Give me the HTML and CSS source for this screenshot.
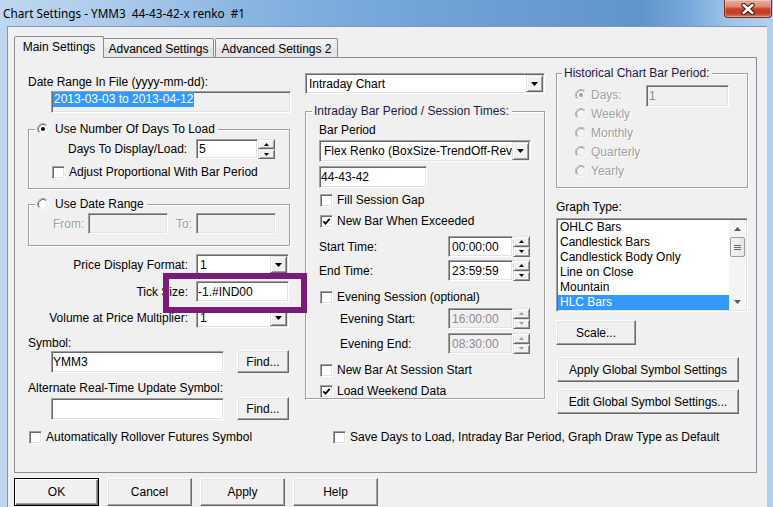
FILE: index.html
```html
<!DOCTYPE html>
<html>
<head>
<meta charset="utf-8">
<title>Chart Settings</title>
<link rel="stylesheet" href="styles.css">
</head>
<body>
<div class="window">
  <div class="titlebar">
    <span class="title">Chart Settings - YMM3  44-43-42-x renko  #1</span>
    <div class="close">
      <svg width="16" height="12" viewBox="0 0 16 12"><path d="M3.5 2 L12.5 10 M12.5 2 L3.5 10" stroke="#3b1510" stroke-width="4.4" stroke-linecap="round"/><path d="M3.5 2 L12.5 10 M12.5 2 L3.5 10" stroke="#fff" stroke-width="2.4" stroke-linecap="round"/></svg>
    </div>
  </div>
  <div class="client">
    <div class="tabs">
      <div class="tab sel">Main Settings</div>
      <div class="tab t2">Advanced Settings</div>
      <div class="tab t3">Advanced Settings 2</div>
    </div>
    <div class="panel">
      <div class="cols">
        <!-- LEFT COLUMN -->
        <div class="col col-left">
          <div class="lbl l-date">Date Range In File (yyyy-mm-dd):</div>
          <div class="field ro date"><span class="hl">2013-03-03 to 2013-04-12</span></div>

          <fieldset class="grp g1">
            <legend class="lg-a"><span class="leg">
              <svg class="radio" width="12" height="12" viewBox="0 0 12 12"><circle cx="6" cy="6" r="5.5" fill="#fff"/><path d="M2.11 9.89A5.5 5.5 0 0 1 9.89 2.11" fill="none" stroke="#a0a0a0"/><path d="M9.89 2.11A5.5 5.5 0 0 1 2.11 9.89" fill="none" stroke="#fff"/><path d="M2.82 9.18A4.5 4.5 0 0 1 9.18 2.82" fill="none" stroke="#696969"/><path d="M9.18 2.82A4.5 4.5 0 0 1 2.82 9.18" fill="none" stroke="#e3e3e3"/><circle cx="6" cy="6" r="2" fill="#000"/></svg>
              <span>Use Number Of Days To Load</span></span></legend>
            <div class="gb g1-body">
              <div class="row days-row">
                <span class="lbl days-l">Days To Display/Load:</span>
                <div class="spin days-spin">
                  <div class="field sv">5</div>
                  <div class="ud"><span class="raised"><svg width="5" height="3" viewBox="0 0 5 3"><path d="M0 3h5L2.5 0z"/></svg></span><span class="raised"><svg width="5" height="3" viewBox="0 0 5 3"><path d="M0 0h5L2.5 3z"/></svg></span></div>
                </div>
              </div>
              <div class="chk adj"><span class="cb"></span><span>Adjust Proportional With Bar Period</span></div>
            </div>
          </fieldset>

          <fieldset class="grp g2">
            <legend class="lg-a"><span class="leg">
              <svg class="radio" width="12" height="12" viewBox="0 0 12 12"><circle cx="6" cy="6" r="5.5" fill="#fff"/><path d="M2.11 9.89A5.5 5.5 0 0 1 9.89 2.11" fill="none" stroke="#a0a0a0"/><path d="M9.89 2.11A5.5 5.5 0 0 1 2.11 9.89" fill="none" stroke="#fff"/><path d="M2.82 9.18A4.5 4.5 0 0 1 9.18 2.82" fill="none" stroke="#696969"/><path d="M9.18 2.82A4.5 4.5 0 0 1 2.82 9.18" fill="none" stroke="#e3e3e3"/></svg>
              <span>Use Date Range</span></span></legend>
            <div class="gb g2-body">
              <div class="row fromto">
                <span class="dis from-l">From:</span>
                <div class="field off ft"></div>
                <span class="dis to-l">To:</span>
                <div class="field off ft"></div>
              </div>
            </div>
          </fieldset>

          <div class="row frow pdf"><span class="rl">Price Display Format:</span>
            <div class="combo c93"><span class="cv">1</span><span class="drop raised"><svg width="7" height="4" viewBox="0 0 7 4"><path d="M0 0h7L3.5 4z"/></svg></span></div></div>
          <div class="row frow tick"><span class="rl">Tick Size:</span>
            <div class="field tickf">-1.#IND00</div></div>
          <div class="row frow vol"><span class="rl">Volume at Price Multiplier:</span>
            <div class="combo c93"><span class="cv">1</span><span class="drop raised"><svg width="7" height="4" viewBox="0 0 7 4"><path d="M0 0h7L3.5 4z"/></svg></span></div></div>

          <div class="lbl sym-l">Symbol:</div>
          <div class="row symrow"><div class="field symf">YMM3</div><div class="btn find">Find...</div></div>
          <div class="lbl alt-l">Alternate Real-Time Update Symbol:</div>
          <div class="row symrow alt"><div class="field symf"></div><div class="btn find">Find...</div></div>
        </div>

        <!-- MIDDLE COLUMN -->
        <div class="col col-mid">
          <div class="combo intraday"><span class="cv">Intraday Chart</span><span class="drop raised"><svg width="7" height="4" viewBox="0 0 7 4"><path d="M0 0h7L3.5 4z"/></svg></span></div>
          <fieldset class="grp g3">
            <legend class="lg-b"><span class="leg navy">Intraday Bar Period / Session Times:</span></legend>
            <div class="gb g3-body">
              <div class="lbl bp-l">Bar Period</div>
              <div class="combo bp"><span class="cv">Flex Renko (BoxSize-TrendOff-Rev</span><span class="drop raised"><svg width="7" height="4" viewBox="0 0 7 4"><path d="M0 0h7L3.5 4z"/></svg></span></div>
              <div class="field bpv">44-43-42</div>
              <div class="chk fsg"><span class="cb"></span><span>Fill Session Gap</span></div>
              <div class="chk nbw"><span class="cb"><svg width="9" height="9" viewBox="0 0 9 9"><path d="M1.3 4.3 L3.5 6.6 L7.7 1.9" fill="none" stroke="#000" stroke-width="1.8"/></svg></span><span>New Bar When Exceeded</span></div>
              <div class="row trow st"><span class="lbl tl">Start Time:</span>
                <div class="spin tspin"><div class="field sv">00:00:00</div><div class="ud"><span class="raised"><svg width="5" height="3" viewBox="0 0 5 3"><path d="M0 3h5L2.5 0z"/></svg></span><span class="raised"><svg width="5" height="3" viewBox="0 0 5 3"><path d="M0 0h5L2.5 3z"/></svg></span></div></div></div>
              <div class="row trow et"><span class="lbl tl">End Time:</span>
                <div class="spin tspin"><div class="field sv">23:59:59</div><div class="ud"><span class="raised"><svg width="5" height="3" viewBox="0 0 5 3"><path d="M0 3h5L2.5 0z"/></svg></span><span class="raised"><svg width="5" height="3" viewBox="0 0 5 3"><path d="M0 0h5L2.5 3z"/></svg></span></div></div></div>
              <div class="chk evs"><span class="cb"></span><span>Evening Session (optional)</span></div>
              <div class="row trow ev1"><span class="lbl tl2">Evening Start:</span>
                <div class="spin tspin off"><div class="field off sv">16:00:00</div><div class="ud"><span class="raised"><svg width="5" height="3" viewBox="0 0 5 3"><path d="M0 3h5L2.5 0z"/></svg></span><span class="raised"><svg width="5" height="3" viewBox="0 0 5 3"><path d="M0 0h5L2.5 3z"/></svg></span></div></div></div>
              <div class="row trow ev2"><span class="lbl tl2">Evening End:</span>
                <div class="spin tspin off"><div class="field off sv">08:30:00</div><div class="ud"><span class="raised"><svg width="5" height="3" viewBox="0 0 5 3"><path d="M0 3h5L2.5 0z"/></svg></span><span class="raised"><svg width="5" height="3" viewBox="0 0 5 3"><path d="M0 0h5L2.5 3z"/></svg></span></div></div></div>
              <div class="chk nbs"><span class="cb"></span><span>New Bar At Session Start</span></div>
              <div class="chk lwd"><span class="cb"><svg width="9" height="9" viewBox="0 0 9 9"><path d="M1.3 4.3 L3.5 6.6 L7.7 1.9" fill="none" stroke="#000" stroke-width="1.8"/></svg></span><span>Load Weekend Data</span></div>
            </div>
          </fieldset>
        </div>

        <!-- RIGHT COLUMN -->
        <div class="col col-right">
          <fieldset class="grp g4">
            <legend class="lg-c"><span class="leg navy">Historical Chart Bar Period:</span></legend>
            <div class="gb g4-body">
              <div class="radios">
                <div class="rrow"><svg class="radio" width="12" height="12" viewBox="0 0 12 12"><circle cx="6" cy="6" r="5.5" fill="#f4f4f4"/><path d="M2.11 9.89A5.5 5.5 0 0 1 9.89 2.11" fill="none" stroke="#b4b4b4"/><path d="M9.89 2.11A5.5 5.5 0 0 1 2.11 9.89" fill="none" stroke="#fff"/><path d="M2.82 9.18A4.5 4.5 0 0 1 9.18 2.82" fill="none" stroke="#a0a0a0"/><path d="M9.18 2.82A4.5 4.5 0 0 1 2.82 9.18" fill="none" stroke="#e3e3e3"/><circle cx="6" cy="6" r="2" fill="#a0a0a0"/></svg><span class="dis">Days:</span></div>
                <div class="rrow"><svg class="radio" width="12" height="12" viewBox="0 0 12 12"><circle cx="6" cy="6" r="5.5" fill="#f4f4f4"/><path d="M2.11 9.89A5.5 5.5 0 0 1 9.89 2.11" fill="none" stroke="#b4b4b4"/><path d="M9.89 2.11A5.5 5.5 0 0 1 2.11 9.89" fill="none" stroke="#fff"/><path d="M2.82 9.18A4.5 4.5 0 0 1 9.18 2.82" fill="none" stroke="#a0a0a0"/><path d="M9.18 2.82A4.5 4.5 0 0 1 2.82 9.18" fill="none" stroke="#e3e3e3"/></svg><span class="dis">Weekly</span></div>
                <div class="rrow"><svg class="radio" width="12" height="12" viewBox="0 0 12 12"><circle cx="6" cy="6" r="5.5" fill="#f4f4f4"/><path d="M2.11 9.89A5.5 5.5 0 0 1 9.89 2.11" fill="none" stroke="#b4b4b4"/><path d="M9.89 2.11A5.5 5.5 0 0 1 2.11 9.89" fill="none" stroke="#fff"/><path d="M2.82 9.18A4.5 4.5 0 0 1 9.18 2.82" fill="none" stroke="#a0a0a0"/><path d="M9.18 2.82A4.5 4.5 0 0 1 2.82 9.18" fill="none" stroke="#e3e3e3"/></svg><span class="dis">Monthly</span></div>
                <div class="rrow"><svg class="radio" width="12" height="12" viewBox="0 0 12 12"><circle cx="6" cy="6" r="5.5" fill="#f4f4f4"/><path d="M2.11 9.89A5.5 5.5 0 0 1 9.89 2.11" fill="none" stroke="#b4b4b4"/><path d="M9.89 2.11A5.5 5.5 0 0 1 2.11 9.89" fill="none" stroke="#fff"/><path d="M2.82 9.18A4.5 4.5 0 0 1 9.18 2.82" fill="none" stroke="#a0a0a0"/><path d="M9.18 2.82A4.5 4.5 0 0 1 2.82 9.18" fill="none" stroke="#e3e3e3"/></svg><span class="dis">Quarterly</span></div>
                <div class="rrow"><svg class="radio" width="12" height="12" viewBox="0 0 12 12"><circle cx="6" cy="6" r="5.5" fill="#f4f4f4"/><path d="M2.11 9.89A5.5 5.5 0 0 1 9.89 2.11" fill="none" stroke="#b4b4b4"/><path d="M9.89 2.11A5.5 5.5 0 0 1 2.11 9.89" fill="none" stroke="#fff"/><path d="M2.82 9.18A4.5 4.5 0 0 1 9.18 2.82" fill="none" stroke="#a0a0a0"/><path d="M9.18 2.82A4.5 4.5 0 0 1 2.82 9.18" fill="none" stroke="#e3e3e3"/></svg><span class="dis">Yearly</span></div>
              </div>
              <div class="field off daysv">1</div>
            </div>
          </fieldset>
          <div class="lbl gt-l">Graph Type:</div>
          <div class="listbox">
            <div class="items">
              <div class="item">OHLC Bars</div>
              <div class="item">Candlestick Bars</div>
              <div class="item">Candlestick Body Only</div>
              <div class="item">Line on Close</div>
              <div class="item">Mountain</div>
              <div class="item sel">HLC Bars</div>
            </div>
            <div class="vscroll">
              <span class="sb-arrow"><svg width="7" height="4" viewBox="0 0 7 4"><path d="M0 4h7L3.5 0z" fill="#5a5a5a"/></svg></span>
              <span class="sb-track"><span class="thumb"><svg width="7" height="7" viewBox="0 0 7 7"><path d="M0 1.5h7M0 3.5h7M0 5.5h7" stroke="#6a6a6a" stroke-width="1"/></svg></span></span>
              <span class="sb-arrow"><svg width="7" height="4" viewBox="0 0 7 4"><path d="M0 0h7L3.5 4z" fill="#5a5a5a"/></svg></span>
            </div>
          </div>
          <div class="btn scale">Scale...</div>
          <div class="btn glob apply-g">Apply Global Symbol Settings</div>
          <div class="btn glob edit-g">Edit Global Symbol Settings...</div>
        </div>
      </div>

      <div class="row bottom-checks">
        <div class="chk roll"><span class="cb"></span><span>Automatically Rollover Futures Symbol</span></div>
        <div class="chk save"><span class="cb"></span><span>Save Days to Load, Intraday Bar Period, Graph Draw Type as Default</span></div>
      </div>

      <div class="annot"></div>
    </div>

    <div class="buttons">
      <div class="btn big default">OK</div>
      <div class="btn big">Cancel</div>
      <div class="btn big">Apply</div>
      <div class="btn big">Help</div>
    </div>
  </div>
</div>
</body>
</html>
```

FILE: styles.css
```css
* { box-sizing: border-box; }
html, body { margin: 0; padding: 0; }
body {
  width: 773px; height: 507px; overflow: hidden;
  font-family: "Liberation Sans", Arial, sans-serif; font-size: 12px; color: #000;
  background: linear-gradient(to right, #bfd7f0 0, #adcbeb 110px, #88b4e0 250px, #72a5d9 400px, #6599d0 560px, #6095cc 640px, #76a9db 690px, #a0c4e8 730px, #b3d0ee 773px);
}
.window { width: 773px; height: 507px; display: flex; flex-direction: column; }

/* title bar */
.titlebar { height: 26px; flex: none; display: flex; justify-content: space-between; align-items: flex-start; }
.title { font-family: "Noto Sans", sans-serif; font-size: 11.75px; line-height: 16px; white-space: pre; margin: 5px 0 0 3px; }
.close {
  width: 48px; height: 18px; margin-right: 1px;
  border: 1px solid #7d2a1e; border-top: 0; border-radius: 0 0 4px 4px;
  background: linear-gradient(#eab0a2 0, #dc8874 38%, #c7462d 52%, #c03b21 75%, #da7860 100%);
  box-shadow: inset 0 0 0 1px rgba(255,255,255,.3);
  display: flex; align-items: center; justify-content: center;
}

/* client */
.client {
  flex: 1; margin: 0 6px 0 7px; background: #f0f0f0;
  border-top: 1px solid #7f97b5; border-left: 1px solid #7f97b5;
  padding: 9px 0 0 6px;
}
.tabs { display: flex; align-items: flex-end; height: 21px; }
.tab {
  height: 19px; border: 1px solid #898c95; border-bottom: 0; border-radius: 2px 2px 0 0;
  background: linear-gradient(#f4f4f4, #ececec 50%, #e2e2e2 51%, #e6e6e6);
  display: flex; align-items: center; justify-content: center; white-space: nowrap; padding-top: 1px;
}
.tab.sel { width: 90px; height: 22px; background: #f0f0f0; margin-bottom: -1px; position: relative; z-index: 1; padding-top: 0; padding-bottom: 2px; }
.tab.t2 { width: 111px; margin-left: -1px; }
.tab.t3 { width: 123px; margin-left: 1px; }

.panel {
  width: 743px; height: 416px; border: 1px solid #898c95; background: #f0f0f0;
  position: relative; padding: 0 0 0 13px;
}
.cols { display: flex; height: 362px; }
.col-left { width: 262px; margin-right: 15px; }
.col-mid { width: 240px; margin-right: 11px; }
.col-right { width: 192px; }

.lbl { display: block; line-height: 14px; height: 14px; white-space: nowrap; }
.row { display: flex; align-items: center; }

/* generic controls */
.field {
  height: 22px; background: #fff; white-space: nowrap;
  border: 1px solid; border-color: #a0a0a0 #fff #fff #a0a0a0;
  box-shadow: inset 1px 1px 0 #696969, inset -1px -1px 0 #e3e3e3;
  display: flex; align-items: center; padding-left: 2px;
}
.field.off, .field.ro { background: #f0f0f0; }
.field.off { color: #8d8d8d; }
.raised {
  background: #f0f0f0;
  border: 1px solid; border-color: #e3e3e3 #696969 #696969 #e3e3e3;
  box-shadow: inset 1px 1px 0 #fff, inset -1px -1px 0 #a0a0a0;
}
.combo {
  height: 21px; background: #fff; display: flex; align-items: stretch;
  border: 1px solid; border-color: #a0a0a0 #fff #fff #a0a0a0;
  box-shadow: inset 1px 1px 0 #696969, inset -1px -1px 0 #e3e3e3;
  padding: 1px;
}
.combo .cv { flex: 1; display: flex; align-items: center; padding-left: 2px; white-space: nowrap; overflow: hidden; }
.combo .drop { width: 17px; display: flex; align-items: center; justify-content: center; flex: none; }
.spin { display: flex; height: 21px; }
.spin .field { flex: 1; height: 100%; }
.spin .ud { width: 17px; display: flex; flex-direction: column; flex: none; }
.spin .ud span { flex: 1; display: flex; align-items: center; justify-content: center; }
.spin.off .ud svg { fill: #a0a0a0; }
.cb {
  width: 13px; height: 13px; flex: none; background: #fff;
  border: 1px solid; border-color: #a0a0a0 #fff #fff #a0a0a0;
  box-shadow: inset 1px 1px 0 #696969, inset -1px -1px 0 #e3e3e3;
  display: flex; align-items: center; justify-content: center;
}
.chk { display: flex; align-items: center; gap: 4px; height: 14px; white-space: nowrap; }
.dis { color: #a0a0a0; text-shadow: 1px 1px 0 #fff; }
.btn {
  background: #f0f0f0; display: flex; align-items: center; justify-content: center; white-space: nowrap;
  border: 1px solid; border-color: #fff #696969 #696969 #fff;
  box-shadow: inset -1px -1px 0 #a0a0a0, inset 1px 1px 0 #e3e3e3;
}
.btn.default {
  border: 1px solid #000;
  box-shadow: inset 1px 1px 0 #fff, inset -1px -1px 0 #696969, inset -2px -2px 0 #a0a0a0;
}

/* group boxes */
.grp {
  margin: 0; padding: 0; min-width: 0;
  border: 1px solid #a0a0a0; box-shadow: inset 1px 1px 0 #fff, 1px 1px 0 #fff;
}
.grp legend { padding: 0 3px 0 2px; height: 14px; line-height: 14px; background: #f0f0f0; }
.leg { display: flex; align-items: center; gap: 6px; height: 14px; white-space: nowrap; }
.navy { color: #1a1a4e; }
.grp .lg-a { margin-left: 6px; }
.grp .lg-b { margin-left: 6px; }
.grp .lg-c { margin-left: 5px; }

/* left column */
.l-date { margin-top: 17px; }
.date { margin: 2px 0 0 23px; width: 240px; align-items: flex-start; padding: 0 0 0 1px; }
.hl { background: #3399ff; color: #fff; line-height: 15px; height: 15px; padding: 0 1px; }
.grp.g1 { margin-top: 9px; }
.g1-body { padding: 0 0 9px 0; }
.days-row { margin: 3px 0 0 39px; height: 20px; }
.days-l { width: 128px; }
.days-spin { width: 79px; height: 20px; }
.adj { margin: 6px 0 0 23px; }
.grp.g2 { margin-top: 8px; }
.g2-body { padding: 0 0 11px 0; }
.fromto { margin: 2px 0 0 24px; height: 21px; }
.from-l { width: 35px; }
.to-l { width: 20px; margin-left: 8px; }
.ft { width: 80px; height: 21px; }
.frow { height: 21px; }
.frow .rl { width: 160px; margin-right: 8px; text-align: right; white-space: nowrap; }
.c93 { width: 93px; }
.tickf { width: 93px; height: 21px; padding-left: 1px; }
.pdf { margin-top: 8px; }
.tick { margin-top: 6px; }
.vol { margin-top: 5px; }
.sym-l { margin-top: 8px; }
.symrow { height: 23px; align-items: flex-end; }
.symrow.alt { margin-top: 2px; }
.symf { width: 173px; margin-left: 23px; padding-left: 1px; }
.find { width: 52px; height: 23px; margin-left: 13px; }
.alt-l { margin-top: 8px; }

/* middle column */
.intraday { margin-top: 15px; width: 240px; }
.grp.g3 { margin-top: 10px; }
.g3-body { padding: 0 0 0 13px; }
.bp-l { margin-top: 5px; }
.bp { margin-top: 3px; width: 212px; height: 22px; }
.bp .cv { padding-left: 3px; }
.bpv { margin-top: 4px; width: 108px; padding-left: 1px; }
.fsg { margin: 5px 0 0 1px; }
.nbw { margin: 7px 0 0 1px; }
.trow { height: 21px; }
.tl { width: 129px; }
.tl2 { width: 108px; margin-left: 21px; }
.tspin { width: 82px; }
.tspin .field { padding-left: 3px; }
.st { margin-top: 8px; }
.et { margin-top: 3px; }
.evs { margin: 9px 0 0 1px; }
.ev1 { margin-top: 4px; }
.ev2 { margin-top: 4px; }
.nbs { margin: 9px 0 0 1px; }
.lwd { margin: 7px 0 0 1px; }

/* right column */
.grp.g4 { margin-top: 8px; }
.g4-body { display: flex; align-items: flex-start; padding: 5px 0 7px 18px; }
.radios { width: 71px; display: flex; flex-direction: column; }
.rrow { height: 19px; display: flex; align-items: center; gap: 4px; white-space: nowrap; }
.daysv { width: 83px; padding-left: 2px; color: #6d7a8d; }
.gt-l { margin-top: 12px; }
.listbox {
  margin-top: 4px; width: 192px; height: 94px; display: flex; padding: 1px; background: #fff;
  border: 1px solid; border-color: #a0a0a0 #fff #fff #a0a0a0;
  box-shadow: inset 1px 1px 0 #696969, inset -1px -1px 0 #e3e3e3;
}
.items { flex: 1; display: flex; flex-direction: column; }
.item { height: 15px; line-height: 15px; padding-left: 2px; white-space: nowrap; }
.item.sel { background: #3399ff; color: #fff; }
.vscroll { width: 17px; display: flex; flex-direction: column; background: #f4f4f4; flex: none; }
.sb-arrow { height: 17px; display: flex; align-items: center; justify-content: center; }
.sb-track { flex: 1; display: flex; flex-direction: column; }
.thumb {
  height: 20px; width: 15px; margin-left: 1px; border: 1px solid #9c9c9c; border-radius: 2px;
  background: linear-gradient(to right, #f6f6f6, #e4e4e4);
  display: flex; align-items: center; justify-content: center;
}
.scale { margin-top: 8px; width: 80px; height: 25px; }
.glob { width: 182px; height: 25px; margin-left: 1px; }
.apply-g { margin-top: 12px; }
.edit-g { margin-top: 7px; }

/* bottom */
.bottom-checks { margin-top: 10px; height: 14px; }
.roll { width: 304px; margin-left: 1px; }
.save { gap: 4px; }

.annot {
  position: absolute; left: 148px; top: 215px; width: 144px; height: 40px;
  border: 6px solid #7b1a7b;
}

.buttons { display: flex; gap: 8px; margin-top: 5px; }
.big { width: 85px; height: 28px; }
```
